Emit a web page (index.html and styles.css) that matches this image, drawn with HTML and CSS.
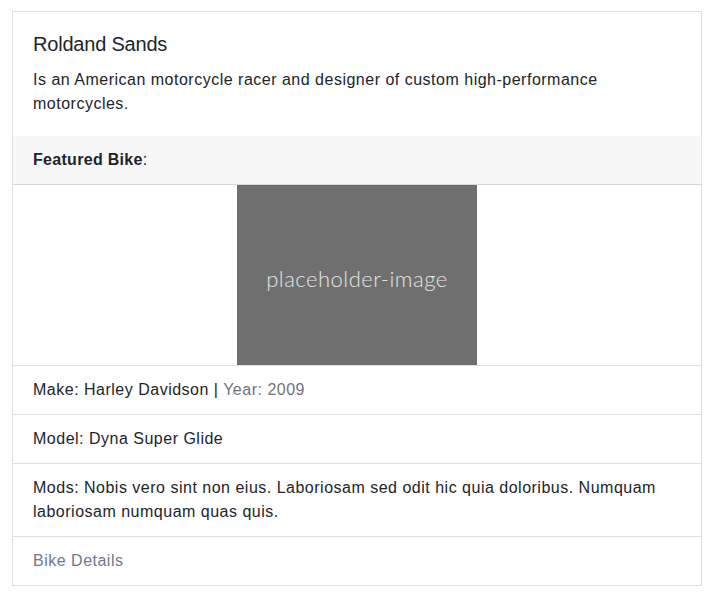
FILE: index.html
```html
<!DOCTYPE html>
<html lang="en">
<head>
<meta charset="utf-8">
<title>Roldand Sands</title>
<link rel="stylesheet" href="styles.css">
</head>
<body>
<div class="card">
  <div class="card-body">
    <h5 class="card-title">Roldand Sands</h5>
    <p class="card-text">Is an American motorcycle racer and designer of custom high-performance motorcycles.</p>
  </div>
  <div class="card-header"><strong>Featured Bike</strong>:</div>
  <div class="media">
    <div class="placeholder"><span>placeholder-image</span></div>
  </div>
  <ul class="list">
    <li class="item">Make: Harley Davidson | <span class="muted">Year: 2009</span></li>
    <li class="item">Model: Dyna Super Glide</li>
    <li class="item">Mods: Nobis vero sint non eius. Laboriosam sed odit hic quia doloribus. Numquam laboriosam numquam quas quis.</li>
    <li class="item"><a class="link" href="#">Bike Details</a></li>
  </ul>
</div>
</body>
</html>
```

FILE: styles.css
```css
* { box-sizing: border-box; }
html, body { margin: 0; padding: 0; background: #fff; }
body {
  padding: 11px 11px 0 12px;
  font-family: "Liberation Sans", Arial, sans-serif;
  font-size: 16px;
  line-height: 24px;
  letter-spacing: 0.5px;
  color: #212529;
}
.card {
  border: 1px solid rgba(0,0,0,0.125);
  width: 690px;
  background: #fff;
}
.card-body { padding: 20px; }
.card-title {
  margin: 0 0 12px;
  font-size: 20px;
  font-weight: 500;
  line-height: 24px;
  letter-spacing: -0.2px;
}
.card-text { margin: 0; }
.card-header {
  padding: 12px 20px;
  background: #f7f7f7;
  border-bottom: 1px solid rgba(0,0,0,0.125);
}
.card-header strong { font-weight: 700; letter-spacing: 0.3px; }
.media {
  display: flex;
  justify-content: center;
}
.placeholder {
  width: 240px;
  height: 180px;
  background: #6f6f6f;
  display: flex;
  align-items: center;
  justify-content: center;
}
.placeholder span {
  font-family: Lato, "Open Sans", sans-serif;
  font-weight: 300;
  font-size: 22px;
  letter-spacing: 0.5px;
  color: #e2e4e6;
  padding-top: 8px;
}
.list { list-style: none; margin: 0; padding: 0; }
.item {
  padding: 12px 20px;
  border-top: 1px solid rgba(0,0,0,0.125);
}
.muted { color: #6c757d; }
.link { color: #6b7a8f; text-decoration: none; }
```
